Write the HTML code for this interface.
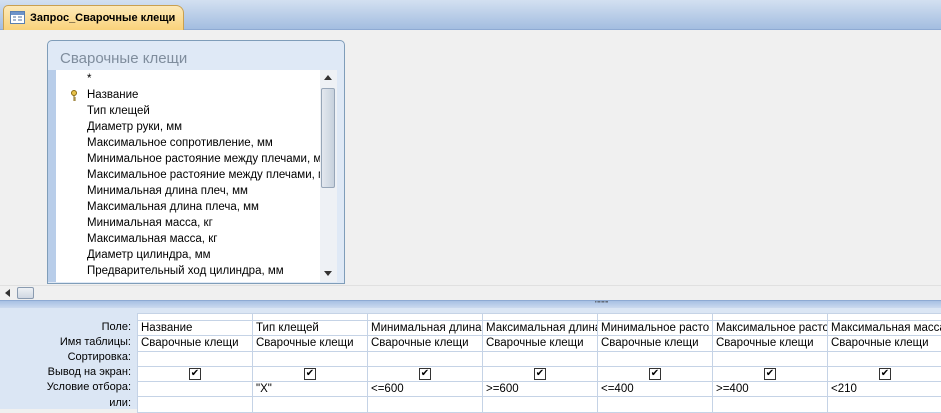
<!DOCTYPE html>
<html><head><meta charset="utf-8"><style>
*{margin:0;padding:0;box-sizing:border-box}
body{width:941px;height:409px;overflow:hidden;background:#f0f0f0;font-family:"Liberation Sans","DejaVu Sans",sans-serif;font-size:11.5px;color:#000;position:relative}
.abs{position:absolute}
#tabbar{left:0;top:0;width:941px;height:30px;background:linear-gradient(#d3e0f1,#a3bde0);border-bottom:1px solid #8eaad3}
#tab{left:3px;top:5px;width:181px;height:25px;background:linear-gradient(#fde9b8,#f9d27a);border:1px solid #c9a050;border-bottom:none;border-radius:5px 8px 0 0;font-weight:bold;font-size:11px;line-height:24px;padding-left:26px}
#win{left:47px;top:40px;width:298px;height:244px;background:#dfe9f6;border:1px solid #7f9db9;border-radius:5px 5px 0 0}
#wtitle{left:12px;top:9px;font-size:15px;color:#7f8d9d}
#list{left:7px;top:29px;width:265px;height:212px;background:#fff}
#lstrip{left:0;top:29px;width:8px;height:212px;background:#b8cde9}
#vs{left:272px;top:29px;width:17px;height:212px;background:#eef1f5}
#thumb{left:1px;top:18px;width:14px;height:100px;background:linear-gradient(90deg,#e3e8ef,#c7d1dd);border:1px solid #97a6b8;border-radius:2px}
.it{position:absolute;left:32px;white-space:nowrap;width:233px;overflow:hidden}
#hs{left:0;top:285px;width:941px;height:15px;background:#f0f0f0;border-top:1px solid #e0e0e0}
#split{left:0;top:300px;width:941px;height:8px;background:linear-gradient(#a7c0e3,#cbdaef);border-top:1px solid #8eaad3}
#bot{left:0;top:308px;width:941px;height:101px;background:#dbe6f4}
.lbl{position:absolute;right:810px;text-align:right;white-space:nowrap;font-size:11px}
table{position:absolute;left:137px;top:313px;border-collapse:collapse;background:#fff;table-layout:fixed;width:805px}
td{border:1px solid #c5d3e6;width:115px;height:15.3px;padding:0 3px;white-space:nowrap;overflow:hidden;font-size:11.5px;line-height:14px}
tr.h td{height:7px}
td.c{text-align:center}
.cb{display:inline-block;width:12px;height:12px;border:1px solid #333;text-align:center;line-height:10px;font-size:10px;font-weight:bold;vertical-align:middle}
</style></head><body>
<div id="tabbar" class="abs"></div>
<div id="tab" class="abs"><svg class="abs" style="left:6px;top:5px" width="15" height="13"><rect x="0.5" y="0.5" width="14" height="12" fill="#fff" stroke="#5a7fb0"/><rect x="1" y="1" width="13" height="3" fill="#6d93c9"/><path d="M3 6h3M3 9h3M8 6h4M8 9h4" stroke="#4d6f9e"/></svg>Запрос_Сварочные клещи</div>
<div id="win" class="abs">
<div id="wtitle" class="abs">Сварочные клещи</div>
<div id="list" class="abs">
<div class="it" style="top:3px">*</div>
<div class="it" style="top:19px">Название</div>
<svg class="abs" style="left:15px;top:20px" width="8" height="12"><circle cx="4" cy="3" r="2.5" fill="#e8c24a" stroke="#8a6a10"/><path d="M4 5v6M4 8h2M4 10h2" stroke="#8a6a10"/></svg>
<div class="it" style="top:35px">Тип клещей</div>
<div class="it" style="top:51px">Диаметр руки, мм</div>
<div class="it" style="top:67px">Максимальное сопротивление, мм</div>
<div class="it" style="top:83px">Минимальное растояние между плечами, мм</div>
<div class="it" style="top:99px">Максимальное растояние между плечами, мм</div>
<div class="it" style="top:115px">Минимальная длина плеч, мм</div>
<div class="it" style="top:131px">Максимальная длина плеча, мм</div>
<div class="it" style="top:147px">Минимальная масса, кг</div>
<div class="it" style="top:163px">Максимальная масса, кг</div>
<div class="it" style="top:179px">Диаметр цилиндра, мм</div>
<div class="it" style="top:195px">Предварительный ход цилиндра, мм</div>
</div>
<div id="lstrip" class="abs"></div>
<div id="vs" class="abs"><div class="abs" style="left:4px;top:5px;border:4px solid transparent;border-bottom:5px solid #333;border-top:0"></div><div id="thumb" class="abs"></div><div class="abs" style="left:4px;top:201px;border:4px solid transparent;border-top:5px solid #333;border-bottom:0"></div></div>
</div>
<div id="hs" class="abs"><div class="abs" style="left:5px;top:3px;border:4px solid transparent;border-right:5px solid #333;border-left:0"></div><div class="abs" style="left:17px;top:1px;width:17px;height:12px;background:linear-gradient(#eef1f5,#cfd7e2);border:1px solid #8a9bb0;border-radius:2px"></div></div>
<div id="split" class="abs"><div class="abs" style="left:595px;top:0px;font-size:7px;color:#333">''''''''''</div></div>
<div id="bot" class="abs"></div>
<div class="lbl" style="top:321px">Поле:</div>
<div class="lbl" style="top:336px">Имя таблицы:</div>
<div class="lbl" style="top:351px">Сортировка:</div>
<div class="lbl" style="top:366px">Вывод на экран:</div>
<div class="lbl" style="top:381px">Условие отбора:</div>
<div class="lbl" style="top:397px">или:</div>
<table>
<tr class="h"><td></td><td></td><td></td><td></td><td></td><td></td><td></td></tr>
<tr><td>Название</td><td>Тип клещей</td><td>Минимальная длина</td><td>Максимальная длина</td><td>Минимальное расто</td><td>Максимальное расто</td><td>Максимальная масса</td></tr>
<tr><td>Сварочные клещи</td><td>Сварочные клещи</td><td>Сварочные клещи</td><td>Сварочные клещи</td><td>Сварочные клещи</td><td>Сварочные клещи</td><td>Сварочные клещи</td></tr>
<tr><td></td><td></td><td></td><td></td><td></td><td></td><td></td></tr>
<tr><td class="c"><span class="cb">✔</span></td><td class="c"><span class="cb">✔</span></td><td class="c"><span class="cb">✔</span></td><td class="c"><span class="cb">✔</span></td><td class="c"><span class="cb">✔</span></td><td class="c"><span class="cb">✔</span></td><td class="c"><span class="cb">✔</span></td></tr>
<tr><td></td><td>"X"</td><td>&lt;=600</td><td>&gt;=600</td><td>&lt;=400</td><td>&gt;=400</td><td>&lt;210</td></tr>
<tr><td></td><td></td><td></td><td></td><td></td><td></td><td></td></tr>
</table>
</body></html>
